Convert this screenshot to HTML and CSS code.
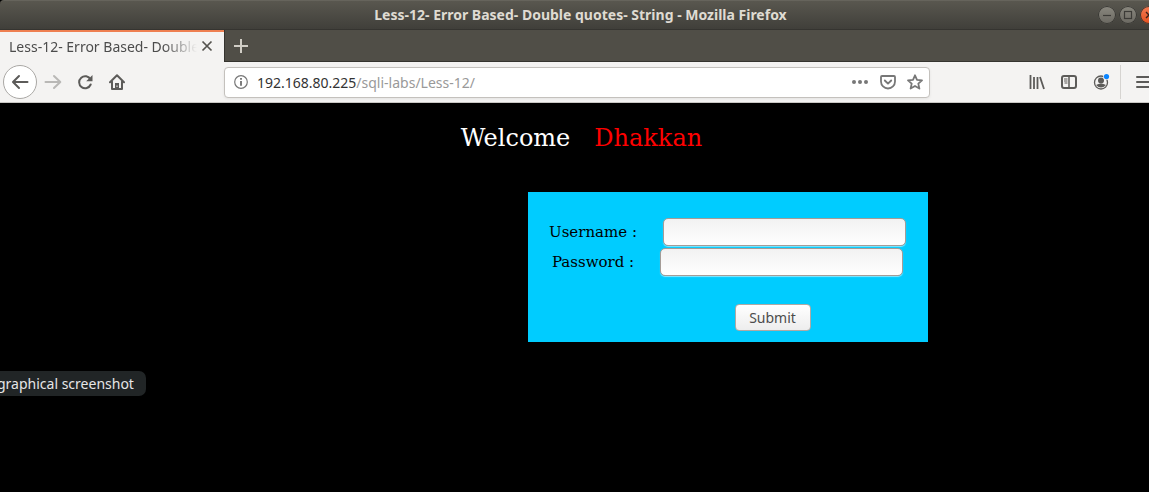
FILE: index.html
```html
<!DOCTYPE html>
<html lang="en">
<head>
<meta charset="utf-8">
<title>Less-12- Error Based- Double quotes- String</title>
<link rel="stylesheet" href="styles.css">
</head>
<body>
<header class="titlebar">
  <h1 class="window-title">Less-12- Error Based- Double quotes- String - Mozilla Firefox</h1>
  <div class="window-controls">
    <button class="control" aria-label="Minimize"><svg width="18" height="18" viewBox="0 0 18 18"><path d="M5 9.5h8" stroke="#3c3b37" stroke-width="1.2"/></svg></button>
    <button class="control" aria-label="Maximize"><svg width="18" height="18" viewBox="0 0 18 18"><rect x="5.5" y="5.5" width="7" height="7" fill="none" stroke="#3c3b37" stroke-width="1.2"/></svg></button>
    <button class="control control-close" aria-label="Close window"><svg width="18" height="18" viewBox="0 0 18 18"><path d="M6 6l6 6M12 6l-6 6" stroke="#3c2018" stroke-width="1.4"/></svg></button>
  </div>
</header>
<div class="tabs">
  <div class="tab">
    <span class="tab-label">Less-12- Error Based- Double quotes- String</span>
    <button class="tab-button" aria-label="Close tab"><svg width="12" height="12" viewBox="0 0 12 12"><path d="M1.5 1.5l9 9M10.5 1.5l-9 9" stroke="#55534f" stroke-width="1.7"/></svg></button>
  </div>
  <button class="new-tab" aria-label="New tab"><svg width="16" height="16" viewBox="0 0 16 16"><path d="M8 1v14M1 8h14" stroke="#d0cdc5" stroke-width="2"/></svg></button>
</div>
<nav class="toolbar">
  <div class="nav-group">
    <button class="tool back" aria-label="Back"><svg width="18" height="18" viewBox="0 0 18 18"><path d="M16.5 9H2.5M8 3L2 9L8 15" fill="none" stroke="#5c5b59" stroke-width="2" stroke-linecap="round" stroke-linejoin="round"/></svg></button>
    <button class="tool" aria-label="Forward"><svg width="18" height="18" viewBox="0 0 18 18"><path d="M1.5 9H16M10 3l6.3 6L10 15" fill="none" stroke="#b9b8b6" stroke-width="2" stroke-linecap="round" stroke-linejoin="round"/></svg></button>
    <button class="tool" aria-label="Reload"><svg width="16" height="16" viewBox="0 0 16 16"><path d="M13.5 5.5A6 6 0 1 0 13.7 10.5" fill="none" stroke="#5c5b59" stroke-width="2" stroke-linecap="round"/><path d="M15.5 1v6.300H9.2z" fill="#5c5b59"/></svg></button>
    <button class="tool" aria-label="Home"><svg width="16" height="16" viewBox="0 0 16 16"><path d="M1 8.2L8 1.3l7 6.900M3 7.5V15h10V7.5" fill="none" stroke="#5c5b59" stroke-width="2" stroke-linecap="round" stroke-linejoin="round"/><path d="M6 15V9h4v6z" fill="#5c5b59"/><path d="M8 11.5v1.5" stroke="#f4f3f2"/></svg></button>
  </div>
  <div class="address">
    <svg width="14" height="14" viewBox="0 0 14 14"><circle cx="7" cy="7" r="6.3" fill="none" stroke="#777" stroke-width="1.2"/><path d="M7 3v1.700M7 6v4.800" stroke="#666" stroke-width="1.7"/></svg>
    <div class="url"><span class="host">192.168.80.225</span>/sqli-labs/Less-12/</div>
    <div class="address-actions">
      <button class="address-button" aria-label="Page actions"><svg width="18" height="16" viewBox="0 0 18 16"><g fill="#777"><circle cx="3" cy="8" r="2"/><circle cx="9" cy="8" r="2"/><circle cx="15" cy="8" r="2"/></g></svg></button>
      <button class="address-button" aria-label="Save to Pocket"><svg width="16" height="16" viewBox="0 0 16 16"><path d="M2 2h12q1 0 1 1v4.500a7 7 0 0 1-14 0V3q0-1 1-1z" fill="none" stroke="#777" stroke-width="1.8"/><path d="M4.8 6.5L8 9.6l3.2-3.1" fill="none" stroke="#777" stroke-width="1.9" stroke-linecap="round" stroke-linejoin="round"/></svg></button>
      <button class="address-button" aria-label="Bookmark this page"><svg width="16" height="16" viewBox="0 0 16 16"><path d="M8 1.3l2 4.500 5 .5-3.700 3.300 1.100 5L8 12l-4.400 2.600 1.100-5L1 6.300l5-.5z" fill="none" stroke="#777" stroke-width="1.8" stroke-linejoin="round"/></svg></button>
    </div>
  </div>
  <div class="tools-right">
    <button class="tool" aria-label="Library"><svg width="16" height="16" viewBox="0 0 16 16"><path d="M1.5 1v14M5 3v12M8.500 3v12M11 3l4 12" fill="none" stroke="#5c5b59" stroke-width="1.8"/></svg></button>
    <button class="tool" aria-label="Sidebars"><svg width="16" height="16" viewBox="0 0 16 16"><rect x="1" y="2" width="14" height="12" rx="2" fill="none" stroke="#5c5b59" stroke-width="2"/><path d="M8 2v12" stroke="#5c5b59" stroke-width="1.5"/><path d="M3 5h3.500M3 7h3.500M3.500 9h3" stroke="#5c5b59"/></svg></button>
    <button class="tool" aria-label="Account"><svg width="18" height="18" viewBox="0 0 18 18"><circle cx="9" cy="9.5" r="6.5" fill="none" stroke="#5c5b59" stroke-width="1.3"/><circle cx="9" cy="7.5" r="3" fill="#5c5b59"/><path d="M4 12q5-3 10 0-5 5-10 0z" fill="#5c5b59"/><circle cx="14.5" cy="3.5" r="3.3" fill="#f4f3f2"/><circle cx="14.5" cy="3.5" r="2.6" fill="#0a84ff"/></svg></button>
    <button class="tool menu" aria-label="Open menu"><svg width="16" height="16" viewBox="0 0 16 16"><path d="M2 3h12M2 8h12M2 13h12" stroke="#5c5b59" stroke-width="2" stroke-linecap="round"/></svg></button>
  </div>
</nav>
<main class="page">
  <p class="welcome">Welcome<span class="name">Dhakkan</span></p>
  <form class="login">
    <div class="field"><label for="uname">Username :</label><input class="text-input" id="uname" type="text"></div>
    <div class="field"><label for="passwd">Password :</label><input class="text-input" id="passwd" type="password"></div>
    <button class="submit" type="button">Submit</button>
  </form>
  <div class="tooltip">graphical screenshot</div>
</main>
</body>
</html>
```
FILE: styles.css
```css
* { box-sizing: border-box; }
body {
  margin: 0;
  min-height: 100vh;
  display: flex;
  flex-direction: column;
  overflow: hidden;
  background: #000;
  font-family: "Noto Sans", "Open Sans", sans-serif;
  font-size: 14px;
}
button { padding: 0; border: 0; background: none; font: inherit; }
svg { display: block; flex: none; }

.titlebar {
  display: grid;
  grid-template-columns: 1fr auto 1fr;
  align-items: center;
  height: 30px;
  margin-right: -12px;
  border-top: 1px solid #66645c;
  border-radius: 4px 0 0 0;
  border-bottom: 1px solid #353430;
  background: linear-gradient(#59574f, #403f3a);
}
.window-title {
  grid-column: 2;
  margin: 0;
  color: #dfdbd2;
  font: bold 14px/20px "Noto Sans", sans-serif;
}
.window-controls { display: flex; justify-content: flex-end; gap: 3px; padding-right: 3px; }
.control {
  width: 18px;
  height: 18px;
  border-radius: 50%;
  background: linear-gradient(#8a887f, #6a6861);
  box-shadow: inset 0 0 0 1px #383733;
}
.control-close { background: linear-gradient(#f47b54, #e4501f); }

.tabs { display: flex; height: 32px; background: #504e47; border-bottom: 1px solid #35342f; }
.tab {
  display: flex;
  align-items: center;
  gap: 4px;
  width: 224px;
  height: 32px;
  padding: 0 11px 2px 9px;
  border-top: 2px solid #ee7f51;
  background: #f4f3f2;
  color: #4c4c4c;
}
.tab-label {
  flex: 1;
  overflow: hidden;
  white-space: nowrap;
  mask-image: linear-gradient(to right, #000 82%, transparent);
}
.new-tab {
  display: grid;
  place-items: center;
  width: 33px;
  border-left: 1px solid #35342f;
}

.toolbar {
  display: flex;
  align-items: center;
  height: 41px;
  padding-left: 3px;
  background: #f4f3f2;
  border-bottom: 1px solid #c9c7c4;
}
.nav-group { display: flex; align-items: center; width: 221px; }
.tool { display: grid; place-items: center; flex: none; width: 32px; height: 34px; }
.back { width: 34px; border: 1px solid #aaa8a5; border-radius: 50%; background: #fff; }
.address {
  display: flex;
  align-items: center;
  flex: 1;
  height: 31px;
  padding: 0 6px 0 9px;
  gap: 9px;
  border: 1px solid #c4c1bd;
  border-radius: 4px;
  background: #fff;
  box-shadow: 0 1px 3px #0001;
}
.url { flex: 1; color: #999; }
.host { color: #333; }
.address-actions { display: flex; gap: 11px; }
.tools-right { display: flex; align-items: center; margin-left: 91px; margin-right: -11px; }
.menu { width: 40px; margin-left: 3px; padding-left: 4px; border-left: 1px solid #d6d4d1; }

.page {
  position: relative;
  flex: 1;
  padding-top: 19px;
  font-family: "DejaVu Serif", serif;
}
.welcome { margin: 0; padding-left: 14px; color: #fff; font-size: 24px; line-height: 32px; text-align: center; }
.name { margin-left: 24px; color: #f00; }
.login {
  display: flex;
  flex-direction: column;
  align-items: center;
  gap: 2px;
  width: 400px;
  height: 150px;
  margin: 38px 0 0 calc(50% - 47px);
  padding-top: 26px;
  background: #0cf;
  font-size: 15px;
}
.field { display: flex; align-items: center; gap: 26px; }
.text-input {
  width: 243px;
  height: 28px;
  border: 1px solid #a49c97;
  border-radius: 5px;
  background: linear-gradient(#f2f2f2, #fff);
  box-shadow: 0 1px 1px #fff8;
}
.submit {
  width: 76px;
  height: 27px;
  margin: 26px 0 0 90px;
  border: 1px solid #b0a9a4;
  border-radius: 4px;
  background: linear-gradient(#fff, #ededed);
  color: #4c4c4c;
  font-family: "Noto Sans", sans-serif;
  font-size: 14px;
}
.tooltip {
  position: absolute;
  top: 268px;
  left: -3px;
  padding: 0 12px 0 0;
  border-radius: 0 7px 7px 0;
  background: #212526;
  color: #e6e6e6;
  font: 14px/25px "Noto Sans", sans-serif;
}
```
